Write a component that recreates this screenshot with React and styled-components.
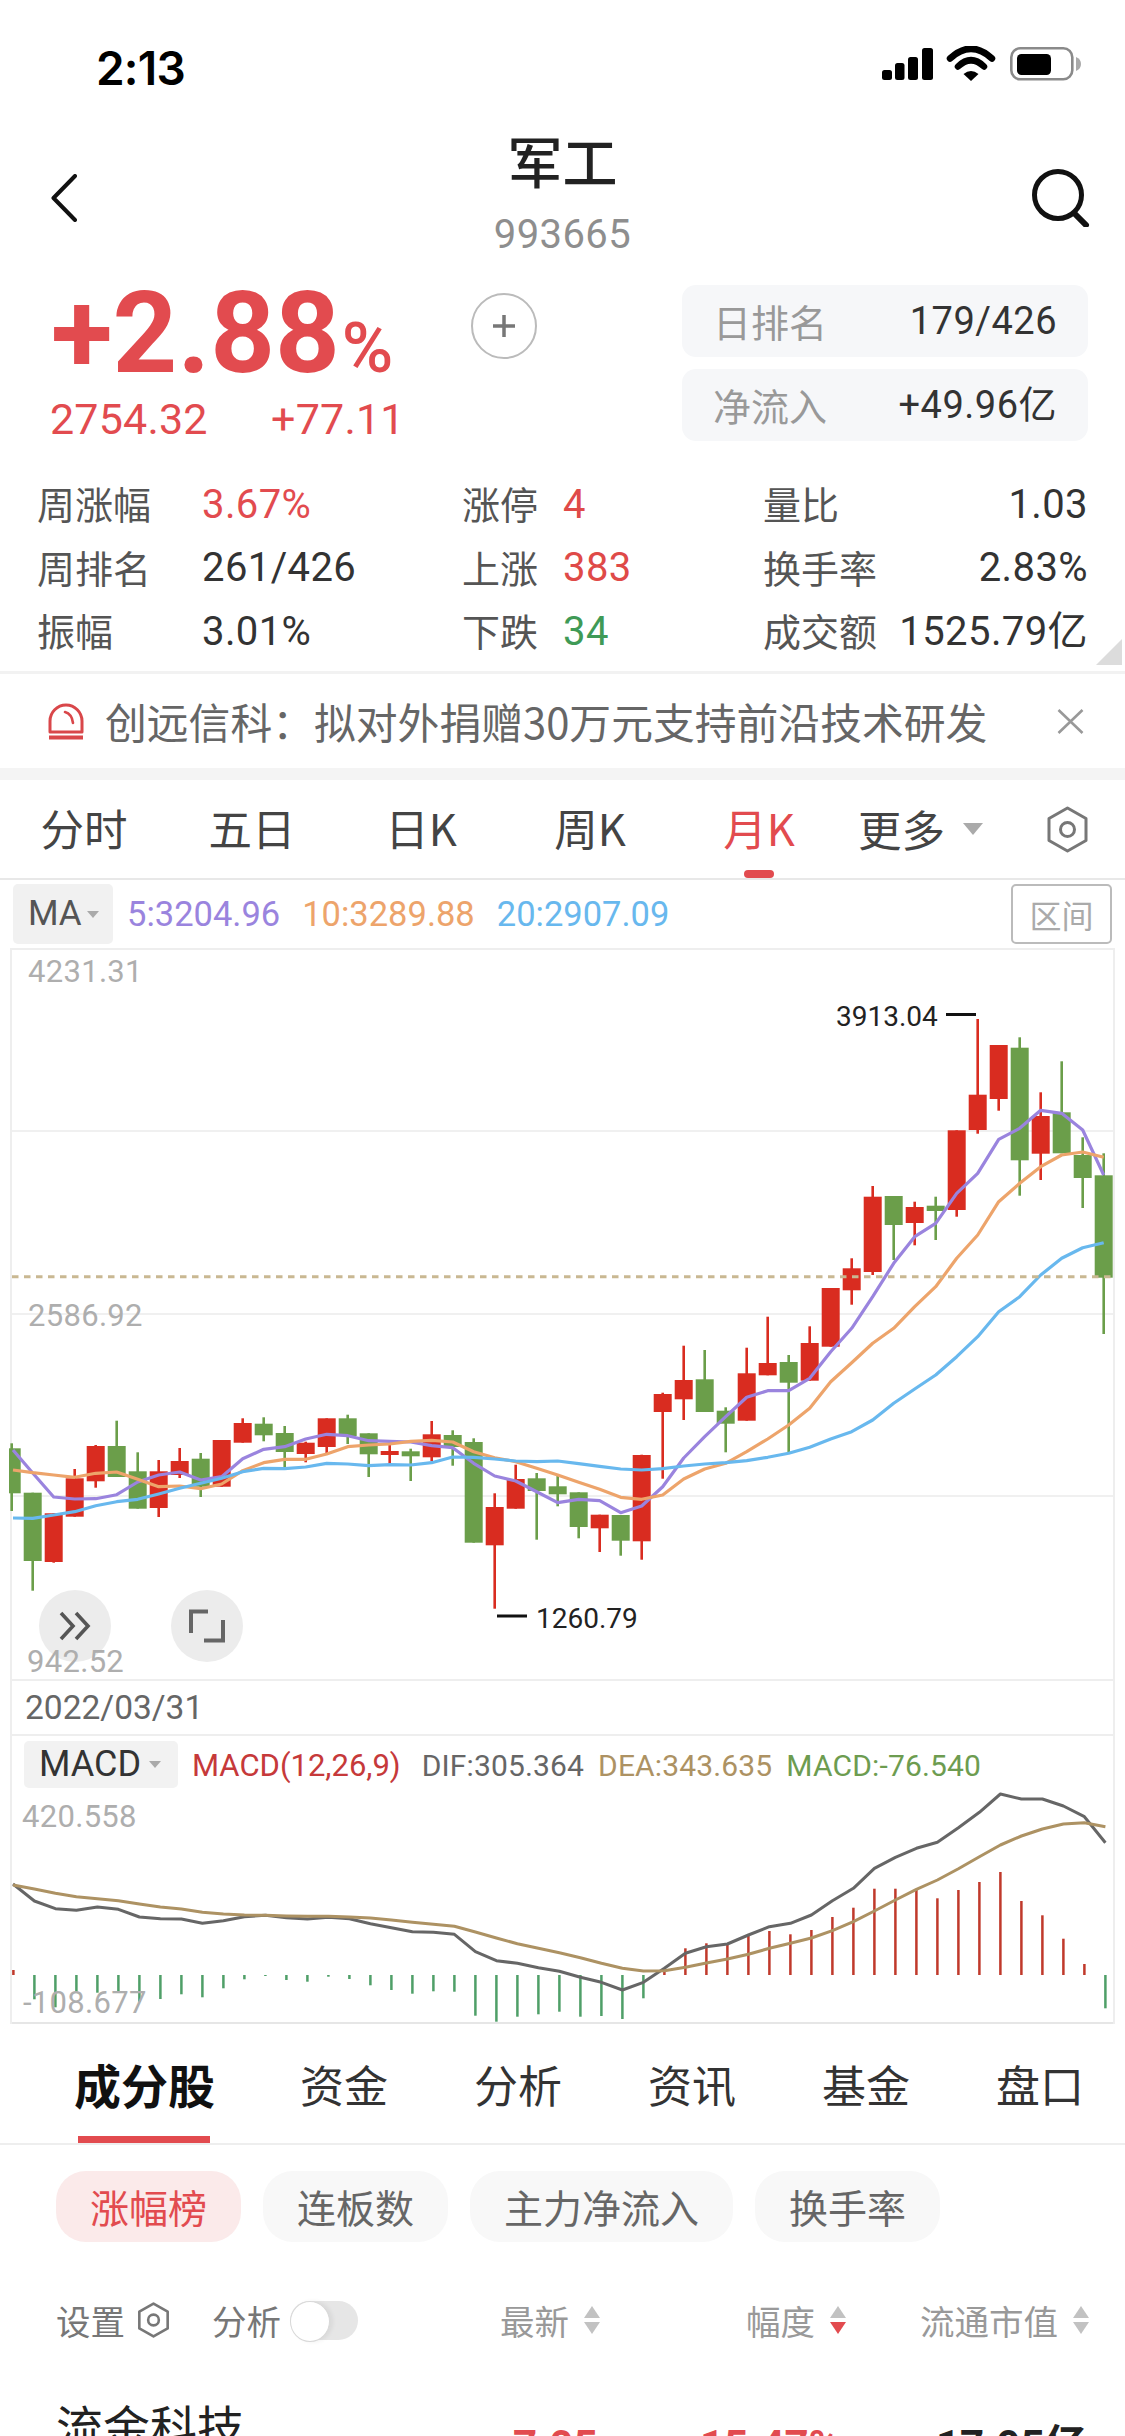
import React from "react";
import styled, { createGlobalStyle } from "styled-components";

const NUM = `Roboto, "Noto Sans CJK SC", sans-serif`;
const RED = "#e24b4f";

const Global = createGlobalStyle`
  html, body { margin: 0; padding: 0; background: #fff; }
  * { box-sizing: border-box; }
`;

const Page = styled.div`
  width: 1125px; height: 2436px; overflow: hidden; background: #fff;
  display: flex; flex-direction: column;
  font-family: ${NUM}; color: #333;
`;

/* status bar */
const StatusBar = styled.div`
  height: 130px; flex: none; padding: 46px 44px 0 96px;
  display: flex; justify-content: space-between; align-items: flex-start;
`;
const Clock = styled.div`
  font: 600 46px/44px Inter, sans-serif; color: #000; letter-spacing: -0.8px;
`;

/* nav */
const NavBar = styled.div`
  height: 136px; flex: none; padding: 0 35px 0 51px;
  display: flex; align-items: center; justify-content: space-between; position: relative;
`;
const TitleStack = styled.div`
  position: absolute; left: 0; right: 0; top: -3px;
  display: flex; flex-direction: column; align-items: center;
`;
const Title = styled.div`
  font: 500 55px/64px "Noto Sans CJK SC", sans-serif; color: #222;
`;
const Code = styled.div`
  margin-top: 24px; font: 400 40px/40px ${NUM}; color: #8e8e8e; letter-spacing: 0.4px;
`;

/* quote summary */
const Summary = styled.div`
  height: 207px; flex: none; display: flex; padding: 19px 37px 0 0;
`;
const Lead = styled.div`
  width: 471px; flex: none; padding-left: 50px;
`;
const BigChange = styled.div`
  margin-top: -1px; font: 700 113px/100px ${NUM}; color: ${RED};
  white-space: nowrap; margin-left: 1px;
`;
const Percent = styled.span`
  font: 500 70px/56px ${NUM}; margin-left: 2px;
`;
const SubRow = styled.div`
  display: flex; margin-top: 10px;
`;
const SubValue = styled.div`
  width: 226px; font: 400 43px/50px ${NUM}; color: ${RED}; letter-spacing: 0.2px;
  &:first-child { width: 250px; }
`;
const AddButton = styled.div`
  width: 66px; height: 66px; margin-top: 8px; flex: none; border-radius: 50%;
  border: 2px solid #bbb; display: flex; align-items: center; justify-content: center;
`;
const RankCol = styled.div`
  margin-left: auto; width: 406px; display: flex; flex-direction: column; gap: 12px;
`;
const RankPill = styled.div`
  height: 72px; border-radius: 14px; background: #f6f7f9; padding: 0 31px;
  display: flex; align-items: center; justify-content: space-between;
`;
const RankLabel = styled.span`
  font: 400 38px/72px "Noto Sans CJK SC", sans-serif; color: #999;
`;
const RankValue = styled.span`
  font: 400 38px/72px ${NUM}; color: #333; letter-spacing: 0.5px;
`;

/* stats */
const Stats = styled.div`
  height: 198px; flex: none; padding: 0 37px; position: relative;
  display: grid; grid-template-columns: 425px 301px 1fr; grid-auto-rows: 63.5px;
  align-items: center; align-content: start;
`;
const Stat = styled.div`
  display: flex; align-items: center;
  justify-content: ${(p) => (p.$spread ? "space-between" : "flex-start")};
`;
const StatLabel = styled.span`
  width: ${(p) => p.$w || "auto"}; flex: none; margin-top: -3px;
  font: 400 38px/50px "Noto Sans CJK SC", sans-serif; color: #555;
`;
const StatValue = styled.span`
  font: 400 40px/50px ${NUM}; letter-spacing: 0.4px;
  color: ${(p) => p.$c || "#333"};
`;
const CornerMark = styled.div`
  position: absolute; right: 3px; bottom: 6px; width: 26px; height: 26px;
  background: #dcdcdc; clip-path: polygon(100% 0, 100% 100%, 0 100%);
`;

/* notice */
const Notice = styled.div`
  height: 97px; flex: none; border-top: 3px solid #f2f2f2; padding: 0 41px 0 48px;
  display: flex; align-items: center; gap: 21px;
`;
const NoticeText = styled.div`
  font: 400 41.8px/60px "Noto Sans CJK SC", sans-serif; color: #666; white-space: nowrap;
`;
const CloseIcon = styled.svg`
  margin-left: auto; flex: none;
`;
const Band = styled.div`
  height: 12px; flex: none; background: #f4f4f4;
`;

/* period tabs */
const PeriodTabs = styled.div`
  height: 100px; flex: none; border-bottom: 2px solid #e8e8e8;
  display: grid; grid-template-columns: 168px 168px 170px 168px 170px 1fr; align-items: center; position: relative;
`;
const Period = styled.div`
  text-align: center; position: relative; height: 98px;
  font: 400 43.5px/96px "Noto Sans CJK SC", Roboto, sans-serif;
  color: ${(p) => (p.$on ? RED : "#444")};
  &::after {
    content: ""; display: ${(p) => (p.$on ? "block" : "none")};
    position: absolute; left: 70px; bottom: 0; width: 30px; height: 8px; border-radius: 4px; background: ${RED};
  }
`;
const More = styled.div`
  display: flex; align-items: center; padding: 0 36px 0 14px; height: 98px;
`;
const MoreLabel = styled.span`
  font: 400 43.5px/96px "Noto Sans CJK SC", sans-serif; color: #444; margin-right: 18px;
`;
const MoreIcon = styled.span`
  margin-left: auto; display: flex;
`;
const Caret = styled.span`
  width: 0; height: 0; display: inline-block; flex: none;
  border-left: ${(p) => p.$s}px solid transparent; border-right: ${(p) => p.$s}px solid transparent;
  border-top: ${(p) => p.$s * 1.2}px solid #aaa;
`;

/* MA legend */
const LegendRow = styled.div`
  height: 68px; flex: none; padding: 4px 13px 0 13px; display: flex; align-items: flex-start;
`;
const IndicatorChip = styled.div`
  width: 100px; height: 60px; background: #f1f1f1; border-radius: 5px;
  display: flex; align-items: center; padding-left: 15px; gap: 5px; flex: none;
  font: 400 35px/60px ${NUM}; color: #555;
`;
const LegendItems = styled.div`
  display: flex; margin-left: 14px; gap: 22px;
`;
const LegendItem = styled.span`
  font: 400 34.5px/60px ${NUM}; color: ${(p) => p.$c};
`;
const RangeButton = styled.div`
  margin-left: auto; width: 101px; height: 60px; border: 2px solid #bbb; border-radius: 5px;
  text-align: center; font: 400 32px/56px "Noto Sans CJK SC", sans-serif; color: #aaa;
`;

/* chart frame */
const ChartFrame = styled.div`
  width: 1105px; margin-left: 10px; flex: none; position: relative;
  border: 2px solid #eee; border-width: 2px 2px 0;
`;
const KlineBox = styled.div`
  height: 729px; position: relative;
`;
const ChartSvg = styled.svg`
  display: block; overflow: visible; position: relative;
`;
const AxisLabel = styled.div`
  position: absolute; left: ${(p) => p.$x}px; top: ${(p) => p.$y}px;
  font: 400 31px/36px ${NUM}; color: #aeaeae; letter-spacing: 0.3px;
`;
const FloatButton = styled.div`
  position: absolute; left: ${(p) => p.$x}px; top: 640px; width: 72px; height: 72px; border-radius: 50%;
  background: #ececec; display: flex; align-items: center; justify-content: center;
`;
const DateRow = styled.div`
  height: 55px; border-top: 2px solid #eee; padding-left: 13px;
  font: 400 33.5px/54px ${NUM}; color: #666;
`;
const MacdLegend = styled.div`
  height: 56px; border-top: 2px solid #eee; padding: 5px 0 0 12px; display: flex; align-items: flex-start;
`;
const MacdChip = styled.div`
  width: 154px; height: 47px; background: #f2f2f2; border-radius: 5px; flex: none;
  display: flex; align-items: center; padding-left: 15px; gap: 8px;
  font: 400 36px/47px ${NUM}; color: #333;
`;
const MacdItems = styled.div`
  display: flex; gap: 14px; margin-left: 14px; padding-top: 1px;
`;
const MacdParams = styled.span`
  font: 400 31px/47px ${NUM}; color: #c6393a; white-space: nowrap; margin-right: 7px;
`;
const MacdItem = styled.span`
  font: 400 30px/47px ${NUM}; color: ${(p) => p.$c}; white-space: nowrap; letter-spacing: 0.15px;
`;
const MacdBox = styled.div`
  height: 234px; position: relative; border-bottom: 2px solid #e6e6e6;
`;

/* lower tabs */
const SectionTabs = styled.div`
  height: 121px; flex: none; border-bottom: 2px solid #eee; padding-left: 74px;
  display: flex; align-items: center; gap: 86px;
`;
const SectionTab = styled.div`
  position: relative; height: 119px;
  font: ${(p) => (p.$on ? "700 47px" : "400 44px")}/120px "Noto Sans CJK SC", sans-serif;
  color: ${(p) => (p.$on ? "#111" : "#333")};
  ${(p) => (p.$on ? "margin-right: -1px;" : "")}
  &::after {
    content: ""; display: ${(p) => (p.$on ? "block" : "none")};
    position: absolute; left: 4px; right: 5px; bottom: 0; height: 7px; background: ${RED};
  }
`;
const PillRow = styled.div`
  height: 121px; flex: none; padding: 26px 0 0 56px; display: flex; gap: 22px; align-items: flex-start;
`;
const Pill = styled.div`
  height: 71px; padding: 0 34px; border-radius: 30px;
  background: ${(p) => (p.$on ? "#fbeaea" : "#f8f8f8")};
  color: ${(p) => (p.$on ? RED : "#666")};
  font: 400 39px/71px "Noto Sans CJK SC", sans-serif;
`;
const columns = "444px 246px 174px 1fr";
const ListHead = styled.div`
  height: 108px; flex: none; padding-left: 56px;
  display: grid; grid-template-columns: ${columns}; align-items: center;
`;
const HeadLeft = styled.div`
  display: flex; align-items: center;
`;
const HeadText = styled.span`
  font: 400 34.5px/50px "Noto Sans CJK SC", sans-serif; color: ${(p) => p.$c || "#999"};
  margin-right: ${(p) => p.$mr || 0}px;
`;
const HeadHex = styled.span`
  display: flex; margin-right: 42px;
`;
const HeadCell = styled.div`
  display: flex; align-items: center; gap: 15px;
`;
const Toggle = styled.div`
  width: 68px; height: 39px; border-radius: 20px; background: #e6e6e6; margin-left: 9px; position: relative;
  &::before {
    content: ""; position: absolute; left: 0; top: 0; width: 38px; height: 39px; border-radius: 50%;
    background: #fff; border: 1.5px solid #d8d8d8; box-shadow: 3px 0 4px rgba(0,0,0,.06);
  }
`;
const SortArrows = styled.span`
  display: inline-flex; flex-direction: column; gap: 4px; flex: none;
`;
const Arrow = styled.span`
  width: 0; height: 0; display: block;
  border-left: 8px solid transparent; border-right: 8px solid transparent;
  ${(p) => (p.$up ? "border-bottom" : "border-top")}: 12px solid ${(p) => p.$c || "#c2c2c2"};
`;
const StockRow = styled.div`
  flex: none; padding-left: 56px; display: grid; grid-template-columns: ${columns}; position: relative;
`;
const StockName = styled.div`
  padding-top: 27px; font: 400 47px/48px "Noto Sans CJK SC", sans-serif; color: #222;
`;
const StockValue = styled.div`
  padding-top: 48px; margin-left: ${(p) => p.$ml || 0}px;
  font: 700 42px/48px ${NUM}; color: ${(p) => p.$c || "#222"}; white-space: nowrap;
`;

/* data: [color, high, bodyTop, bodyBottom, low] */
const candles = [
  ["g",1443.3,1448.3,1493.3,1511],["g",1492.7,1492.7,1561,1590.7],["r",1513.3,1513.3,1562,1562.7],["r",1469,1478.3,1516.7,1516.7],
  ["r",1445,1446,1481.3,1487.7],["g",1420.7,1446,1477,1477],["g",1452.3,1471.3,1508.7,1508.7],["r",1460,1471.3,1508,1517],
  ["r",1448,1461,1475,1478],["g",1453,1458.7,1486.7,1497],["r",1440,1440,1486.7,1486.7],["r",1418.3,1423,1442.7,1442.7],
  ["g",1417.3,1423.7,1435.3,1441.3],["g",1426,1433,1452,1467.3],["r",1441.7,1442.7,1454,1462.3],["r",1418.3,1418.3,1447,1453.3],
  ["g",1414.7,1418.3,1436,1444],["g",1433.3,1433.3,1454.3,1477],["r",1443.3,1451,1455,1464],["g",1448.7,1451.3,1456.3,1481],
  ["r",1421,1434.3,1457.3,1461],["g",1430.3,1435,1447,1465.7],["g",1438.3,1442,1542.7,1542.7],["r",1493.3,1507,1545.3,1608.7],
  ["r",1464.7,1479,1508.7,1508.7],["g",1473,1478.3,1491,1539.7],["g",1476,1486.3,1494.3,1506.3],["g",1492.3,1492.3,1527,1538.3],
  ["r",1514.7,1514.7,1528.3,1552],["g",1515,1515,1540.7,1555.7],["r",1454.7,1455,1541.3,1559.7],["r",1392.7,1394,1412,1478.7],
  ["r",1345.7,1380,1399.3,1420],["g",1350,1379.3,1412,1412],["g",1407.3,1410.7,1423.7,1452.3],["r",1347.7,1373.3,1420.7,1420.7],
  ["r",1316.7,1363,1375.3,1375.3],["g",1355,1362,1382.7,1453.3],["r",1326.3,1343,1380.7,1380.7],["r",1288,1288,1346.7,1346.7],
  ["r",1258.3,1268.3,1290.3,1304.7],["r",1186,1196.7,1272,1275],["g",1196,1196,1225,1260],["r",1201.7,1207,1223,1245.3],
  ["g",1196.7,1205.7,1211,1240],["r",1130.3,1130.3,1210,1216.7],["r",1019,1094.7,1130,1133.7],["r",1045,1045,1099,1110.7],
  ["g",1037.3,1047.7,1160.3,1195.7],["r",1092.3,1116,1153.7,1180],["g",1061.3,1112.3,1153.3,1153.3],["g",1137.3,1155,1178,1208],
  ["g",1153.3,1175.3,1277.7,1334],
];
const ma5 = [1450,1473,1497,1499,1498.7,1494.7,1482,1475,1472,1480,1476.7,1458.7,1449.3,1446.7,1439,1434.3,1435.7,1440.7,1441.3,1442,1445.7,1447.7,1463.3,1476,1481,1491.7,1502.7,1499.3,1500.7,1512.7,1506,1486.7,1458,1436.7,1416.7,1397.3,1390.7,1390.7,1378.3,1351.7,1328.3,1296.7,1263.3,1236.7,1223.3,1193.3,1173.3,1139.3,1128.3,1110.3,1113.3,1130,1175];
const ma10 = [1470,1472.7,1475,1477.3,1473.3,1472,1479.3,1486.7,1486,1488.7,1484,1470.7,1462.7,1459.3,1459.3,1454,1446.7,1445,1444,1441.3,1440.3,1442,1451.7,1457.7,1461.7,1468.3,1475,1482.3,1489.3,1497.3,1499.3,1495,1479,1469,1463.3,1451.7,1439,1425,1408.3,1381.7,1362.7,1343.3,1328.3,1306.7,1286.7,1258.3,1235,1201.7,1183.3,1166.7,1155,1152,1157.3];
const ma20 = [1518,1518.3,1515,1511.7,1505.7,1501.7,1499.3,1494,1488.3,1483.3,1478.3,1471.7,1468.3,1468.7,1467,1463.3,1464,1465.7,1464.7,1465,1462.7,1457,1457.3,1459,1461,1461.7,1461,1463.7,1466.3,1469,1470,1468.7,1466,1464,1462.7,1460.7,1457.3,1453.3,1447.3,1439,1431.7,1420,1403.3,1389,1375,1356.7,1336.7,1311.7,1296.7,1275,1258.3,1247.7,1242.7];
const dif = [1884,1901,1908.7,1910.3,1907,1909.3,1917,1918.7,1919,1923.3,1920.7,1916.7,1915.3,1917.7,1919,1917.3,1918.7,1923.7,1927.7,1931.7,1932.3,1934.3,1951.7,1960.7,1963.3,1967.7,1971.3,1977.3,1982.3,1990,1982.3,1968.3,1953.3,1946.7,1944,1935,1926.7,1923.3,1915,1900.7,1888.3,1868.3,1857.3,1848.3,1842.3,1827.7,1812.3,1794,1799,1799,1806,1816.7,1842.7];
const dea = [1885,1889,1893.3,1896.7,1898.7,1900.7,1904,1907,1909,1912.3,1914,1915,1915.3,1916,1916.3,1916.3,1917,1918,1920,1922.3,1924.3,1926.3,1932,1938,1943.7,1948.3,1952.8,1957.7,1963.3,1968.3,1971,1970.7,1967.3,1963,1959,1954.3,1948.3,1943.3,1938,1930.7,1921.7,1911,1900,1889.3,1880,1868.7,1856.7,1845,1836,1829,1824,1822.7,1826.7];
const bars = [1970,1999.3,2007.3,1991.7,1992.7,1991.7,2001.7,1999,1994.3,1997.3,1988.3,1979.3,1976,1980,1981.7,1976.7,1979,1985.3,1990,1993.7,1991.3,1991.7,2015.7,2021.7,2016.7,2014.3,2011.7,2016.7,2016,2019,1998.3,1968.3,1948.3,1943.3,1944,1936,1931,1934.3,1930,1917,1907.7,1888.7,1888.7,1890,1898.3,1890,1882,1872,1901,1915.3,1938.7,1964,2008.3];

const kx = (i) => 11.7 + 21 * i;
const mx = (i) => 13.4 + 21 * i;
const pts = (arr, fx, from = 13) => arr.map((y, i) => `${i === 0 ? from : fx(i)},${y}`).join(" ");
const CANDLE = { r: "#d92c20", g: "#6b9e4a" };

function KlineChart() {
  return (
    <ChartSvg width="1101" height="729" viewBox="12 950 1101 729" fill="none">
      {[1131, 1314, 1496].map((y) => (
        <line key={y} x1="12" x2="1113" y1={y} y2={y} stroke="#f0f0f0" strokeWidth="2" />
      ))}
      {candles.map(([c, hi, top, bot, lo], i) => {
        const left = Math.max(kx(i) - 9, 9);
        const right = kx(i) + 9;
        return (
          <g key={i} fill={CANDLE[c]}>
            <rect x={kx(i) - 1.3} y={hi} width="2.6" height={lo - hi} />
            <rect x={left} y={top} width={right - left} height={bot - top} />
          </g>
        );
      })}
      <polyline points={pts(ma5, kx)} stroke="#9a84de" strokeWidth="3.2" strokeLinejoin="round" />
      <polyline points={pts(ma10, kx)} stroke="#eda46b" strokeWidth="3.2" strokeLinejoin="round" />
      <polyline points={pts(ma20, kx)} stroke="#68b8ee" strokeWidth="3.2" strokeLinejoin="round" />
      <line x1="12" x2="1113" y1="1276.7" y2="1276.7" stroke="#c9b892" strokeWidth="3" strokeDasharray="6.5 5.5" />
      <text x="836" y="1026" fontFamily="Roboto, sans-serif" fontSize="28" fill="#222">3913.04</text>
      <rect x="946" y="1013" width="30" height="3" fill="#111" />
      <rect x="497" y="1614.5" width="30" height="3" fill="#111" />
      <text x="536" y="1628" fontFamily="Roboto, sans-serif" fontSize="28" fill="#222">1260.79</text>
    </ChartSvg>
  );
}

function MacdChart() {
  return (
    <ChartSvg width="1101" height="234" viewBox="12 1790 1101 234" fill="none">
      {bars.map((y, i) => {
        const up = y < 1975;
        return (
          <rect key={i} x={mx(i) - 1.25} y={up ? y : 1975} width="2.5" height={Math.abs(1975 - y)} fill={up ? "#c0392b" : "#4f9f68"} />
        );
      })}
      <polyline points={pts(dif, mx)} stroke="#666" strokeWidth="3" strokeLinejoin="round" />
      <polyline points={pts(dea, mx)} stroke="#ad9263" strokeWidth="3" strokeLinejoin="round" />
    </ChartSvg>
  );
}

const HexIcon = ({ w, h, sw = 3, r = 7, c = "#777" }) => (
  <svg width={w} height={h} viewBox="0 0 43 47" fill="none">
    <path d="M21.5 2 L40 12.5 V34.5 L21.5 45 L3 34.5 V12.5 Z" stroke={c} strokeWidth={sw} strokeLinejoin="round" />
    <circle cx="21.5" cy="23.5" r={r} stroke={c} strokeWidth={sw} />
  </svg>
);

const stats = [
  [["周涨幅", "3.67%", RED, "165px"], ["涨停", "4", "#df4a48", "101px"], ["量比", "1.03"]],
  [["周排名", "261/426", "#333", "165px"], ["上涨", "383", "#df4a48", "101px"], ["换手率", "2.83%"]],
  [["振幅", "3.01%", "#333", "165px"], ["下跌", "34", "#3f9a56", "101px"], ["成交额", "1525.79亿"]],
];

export default function App() {
  return (
    <Page>
      <Global />
      <StatusBar>
        <Clock>2:13</Clock>
        <svg width="199" height="36" viewBox="882 51 199 36" fill="#000">
          <rect x="882" y="75" width="10" height="10" rx="2.5" />
          <rect x="895" y="68" width="9.5" height="17" rx="2.5" />
          <rect x="908" y="62" width="10" height="23" rx="2.5" />
          <rect x="922" y="53" width="11" height="32" rx="2.5" />
          <path d="M950 63.5 Q971 44 992 63.5" fill="none" stroke="#000" strokeWidth="6.5" strokeLinecap="round" />
          <path d="M958 71.5 Q971 59 984 71.5" fill="none" stroke="#000" strokeWidth="6.5" strokeLinecap="round" />
          <path d="M963.5 79 Q971 73 978.5 79 L971 86 Z" />
          <rect x="1011.3" y="53.3" width="61" height="31" rx="9" fill="none" stroke="#8a8a8a" strokeWidth="2.6" />
          <rect x="1017" y="59" width="34" height="21" rx="4.5" />
          <path d="M1076 62 Q1081 64 1081 69 Q1081 74 1076 76 Z" fill="#aaa" />
        </svg>
      </StatusBar>

      <NavBar>
        <svg width="26" height="48" viewBox="0 0 26 48" fill="none">
          <path d="M24 2 L2.5 24 L24 46" stroke="#111" strokeWidth="4" strokeLinecap="round" strokeLinejoin="round" />
        </svg>
        <TitleStack>
          <Title>军工</Title>
          <Code>993665</Code>
        </TitleStack>
        <svg width="58" height="58" viewBox="0 0 58 58" fill="none">
          <circle cx="26" cy="26" r="23.5" stroke="#111" strokeWidth="5" />
          <path d="M43 45 L54 56" stroke="#111" strokeWidth="6" strokeLinecap="round" />
        </svg>
      </NavBar>

      <Summary>
        <Lead>
          <BigChange>+2.88<Percent>%</Percent></BigChange>
          <SubRow>
            <SubValue>2754.32</SubValue>
            <SubValue>+77.11</SubValue>
          </SubRow>
        </Lead>
        <AddButton>
          <svg width="24" height="24" viewBox="0 0 24 24" fill="none">
            <path d="M12 1 V23 M1 12 H23" stroke="#777" strokeWidth="3.5" />
          </svg>
        </AddButton>
        <RankCol>
          <RankPill><RankLabel>日排名</RankLabel><RankValue>179/426</RankValue></RankPill>
          <RankPill><RankLabel>净流入</RankLabel><RankValue>+49.96亿</RankValue></RankPill>
        </RankCol>
      </Summary>

      <Stats>
        {stats.flat().map(([label, value, c, w]) => (
          <Stat key={label} $spread={!w}>
            <StatLabel $w={w}>{label}</StatLabel>
            <StatValue $c={c}>{value}</StatValue>
          </Stat>
        ))}
        <CornerMark />
      </Stats>

      <Notice>
        <svg width="36" height="37" viewBox="0 0 36 37" fill="none">
          <path d="M2 29 V18 A16 16 0 0 1 34 18 V29 Z" stroke="#d9474a" strokeWidth="3" strokeLinejoin="round" />
          <path d="M17 9 Q24 11 25 20" stroke="#d9474a" strokeWidth="2.6" strokeLinecap="round" />
          <rect x="1" y="32.5" width="34" height="4" fill="#d9474a" />
        </svg>
        <NoticeText>创远信科：拟对外捐赠30万元支持前沿技术研发</NoticeText>
        <CloseIcon width="27" height="25" viewBox="0 0 27 25" fill="none">
          <path d="M1.5 1 L25.5 24 M25.5 1 L1.5 24" stroke="#999" strokeWidth="2.6" />
        </CloseIcon>
      </Notice>
      <Band />

      <PeriodTabs>
        <Period>分时</Period>
        <Period>五日</Period>
        <Period>日K</Period>
        <Period>周K</Period>
        <Period $on>月K</Period>
        <More>
          <MoreLabel>更多</MoreLabel>
          <Caret $s={10} />
          <MoreIcon><HexIcon w={43} h={47} /></MoreIcon>
        </More>
      </PeriodTabs>

      <LegendRow>
        <IndicatorChip>MA<Caret $s={6} /></IndicatorChip>
        <LegendItems>
          <LegendItem $c="#9a84de">5:3204.96</LegendItem>
          <LegendItem $c="#eda46b">10:3289.88</LegendItem>
          <LegendItem $c="#68b8ee">20:2907.09</LegendItem>
        </LegendItems>
        <RangeButton>区间</RangeButton>
      </LegendRow>

      <ChartFrame>
        <KlineBox>
          <FloatButton $x={27}>
            <svg width="32" height="30" viewBox="0 0 32 30" fill="none">
              <path d="M2 2 L14 15 L2 28 M17 2 L29 15 L17 28" stroke="#555" strokeWidth="3.6" />
            </svg>
          </FloatButton>
          <FloatButton $x={159}>
            <svg width="36" height="34" viewBox="0 0 36 34" fill="none">
              <path d="M2 24 V2.5 H19 M34 11 V31.5 H15" stroke="#666" strokeWidth="4" />
            </svg>
          </FloatButton>
          <KlineChart />
          <AxisLabel $x={16} $y={4}>4231.31</AxisLabel>
          <AxisLabel $x={16} $y={348}>2586.92</AxisLabel>
          <AxisLabel $x={15} $y={694}>942.52</AxisLabel>
        </KlineBox>
        <DateRow>2022/03/31</DateRow>
        <MacdLegend>
          <MacdChip>MACD<Caret $s={6} /></MacdChip>
          <MacdItems>
            <MacdParams>MACD(12,26,9)</MacdParams>
            <MacdItem $c="#666">DIF:305.364</MacdItem>
            <MacdItem $c="#ad9263">DEA:343.635</MacdItem>
            <MacdItem $c="#6d9c50">MACD:-76.540</MacdItem>
          </MacdItems>
        </MacdLegend>
        <MacdBox>
          <MacdChart />
          <AxisLabel $x={10} $y={9}>420.558</AxisLabel>
          <AxisLabel $x={11} $y={195}>-108.677</AxisLabel>
        </MacdBox>
      </ChartFrame>

      <SectionTabs>
        <SectionTab $on>成分股</SectionTab>
        <SectionTab>资金</SectionTab>
        <SectionTab>分析</SectionTab>
        <SectionTab>资讯</SectionTab>
        <SectionTab>基金</SectionTab>
        <SectionTab>盘口</SectionTab>
      </SectionTabs>

      <PillRow>
        <Pill $on>涨幅榜</Pill>
        <Pill>连板数</Pill>
        <Pill>主力净流入</Pill>
        <Pill>换手率</Pill>
      </PillRow>

      <ListHead>
        <HeadLeft>
          <HeadText $c="#777" $mr={12}>设置</HeadText>
          <HeadHex><HexIcon w={33} h={36} sw={3.4} r={7} /></HeadHex>
          <HeadText $c="#777">分析</HeadText>
          <Toggle />
        </HeadLeft>
        <HeadCell>
          <HeadText>最新</HeadText>
          <SortArrows><Arrow $up /><Arrow /></SortArrows>
        </HeadCell>
        <HeadCell>
          <HeadText>幅度</HeadText>
          <SortArrows><Arrow $up /><Arrow $c={RED} /></SortArrows>
        </HeadCell>
        <HeadCell>
          <HeadText>流通市值</HeadText>
          <SortArrows><Arrow $up /><Arrow /></SortArrows>
        </HeadCell>
      </ListHead>

      <StockRow>
        <StockName>流金科技</StockName>
        <StockValue $ml={13} $c={RED}>7.05</StockValue>
        <StockValue $ml={-46} $c={RED}>15.47%</StockValue>
        <StockValue $ml={16}>17.95亿</StockValue>
      </StockRow>
    </Page>
  );
}
